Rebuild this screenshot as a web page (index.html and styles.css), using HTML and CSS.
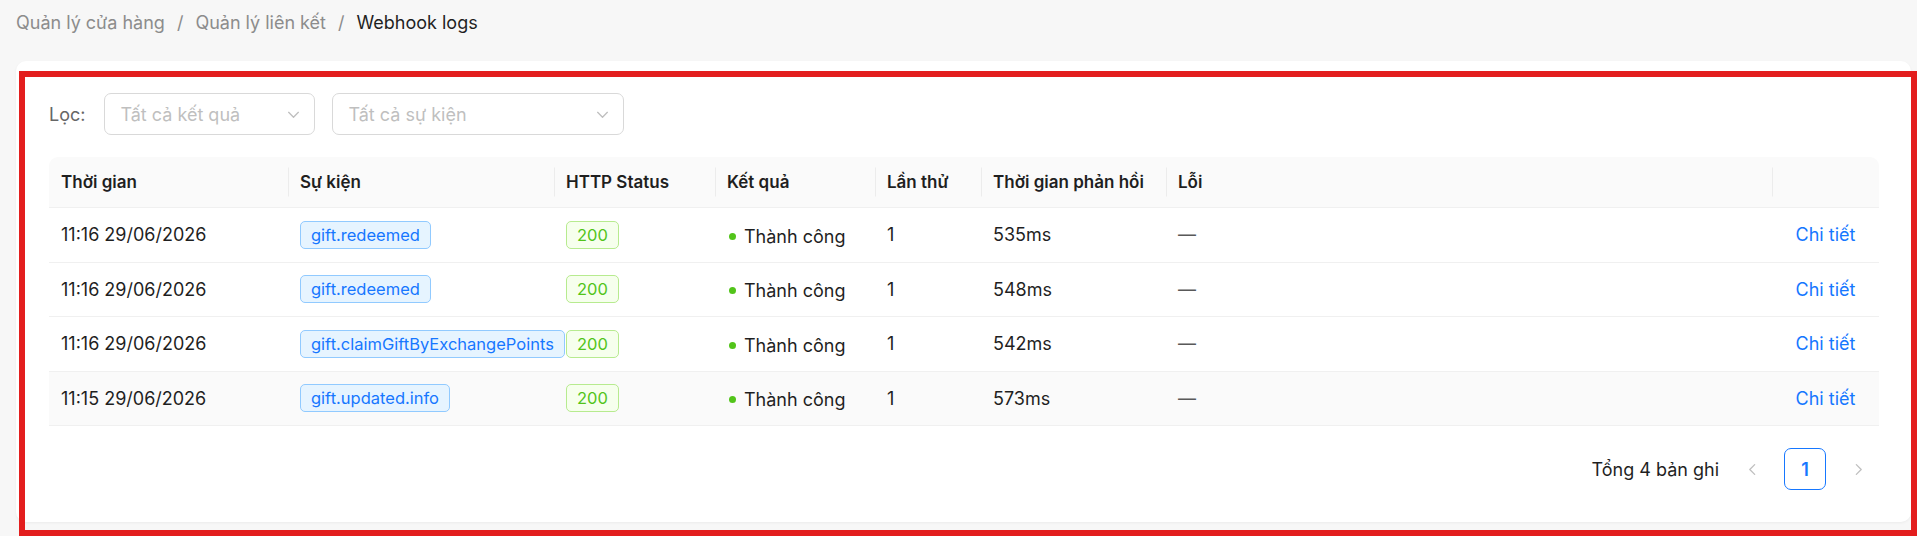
FILE: index.html
```html
<!DOCTYPE html>
<html lang="vi">
<head>
<meta charset="utf-8">
<title>Webhook logs</title>
<link rel="stylesheet" href="styles.css">
</head>
<body>
<div class="page">
  <nav class="breadcrumb">
    <span class="crumb">Quản lý cửa hàng</span>
    <span class="sep">/</span>
    <span class="crumb">Quản lý liên kết</span>
    <span class="sep">/</span>
    <span class="crumb current">Webhook logs</span>
  </nav>

  <section class="card">
    <div class="filters">
      <span class="filter-label">Lọc:</span>
      <div class="select select-result">
        <span class="placeholder">Tất cả kết quả</span>
        <svg class="chev" viewBox="0 0 12 12" width="13" height="13"><path d="M1.5 4 L6 8.5 L10.5 4" fill="none" stroke="currentColor" stroke-width="1.2" stroke-linecap="round" stroke-linejoin="round"/></svg>
      </div>
      <div class="select select-event">
        <span class="placeholder">Tất cả sự kiện</span>
        <svg class="chev" viewBox="0 0 12 12" width="13" height="13"><path d="M1.5 4 L6 8.5 L10.5 4" fill="none" stroke="currentColor" stroke-width="1.2" stroke-linecap="round" stroke-linejoin="round"/></svg>
      </div>
    </div>

    <table class="logs">
      <colgroup>
        <col class="c-time"><col class="c-event"><col class="c-http"><col class="c-result"><col class="c-try"><col class="c-resp"><col class="c-err"><col class="c-act">
      </colgroup>
      <thead>
        <tr>
          <th>Thời gian</th>
          <th class="sepd">Sự kiện</th>
          <th class="sepd">HTTP Status</th>
          <th class="sepd">Kết quả</th>
          <th class="sepd">Lần thử</th>
          <th class="sepd">Thời gian phản hồi</th>
          <th class="sepd">Lỗi</th>
          <th class="sepd"></th>
        </tr>
      </thead>
      <tbody>
        <tr>
          <td>11:16 29/06/2026</td>
          <td><span class="tag tag-blue">gift.redeemed</span></td>
          <td><span class="tag tag-green">200</span></td>
          <td><span class="status"><span class="dot"></span>Thành công</span></td>
          <td>1</td>
          <td>535ms</td>
          <td class="muted">—</td>
          <td class="act"><a class="link">Chi tiết</a></td>
        </tr>
        <tr>
          <td>11:16 29/06/2026</td>
          <td><span class="tag tag-blue">gift.redeemed</span></td>
          <td><span class="tag tag-green">200</span></td>
          <td><span class="status"><span class="dot"></span>Thành công</span></td>
          <td>1</td>
          <td>548ms</td>
          <td class="muted">—</td>
          <td class="act"><a class="link">Chi tiết</a></td>
        </tr>
        <tr>
          <td>11:16 29/06/2026</td>
          <td><span class="tag tag-blue">gift.claimGiftByExchangePoints</span></td>
          <td><span class="tag tag-green">200</span></td>
          <td><span class="status"><span class="dot"></span>Thành công</span></td>
          <td>1</td>
          <td>542ms</td>
          <td class="muted">—</td>
          <td class="act"><a class="link">Chi tiết</a></td>
        </tr>
        <tr class="hover">
          <td>11:15 29/06/2026</td>
          <td><span class="tag tag-blue">gift.updated.info</span></td>
          <td><span class="tag tag-green">200</span></td>
          <td><span class="status"><span class="dot"></span>Thành công</span></td>
          <td>1</td>
          <td>573ms</td>
          <td class="muted">—</td>
          <td class="act"><a class="link">Chi tiết</a></td>
        </tr>
      </tbody>
    </table>

    <div class="pagination">
      <span class="total">Tổng 4 bản ghi</span>
      <span class="pg-item pg-arrow disabled">
        <svg viewBox="0 0 12 12" width="13" height="13"><path d="M8 1.5 L3.5 6 L8 10.5" fill="none" stroke="currentColor" stroke-width="1.2" stroke-linecap="round" stroke-linejoin="round"/></svg>
      </span>
      <span class="pg-item pg-active">1</span>
      <span class="pg-item pg-arrow disabled">
        <svg viewBox="0 0 12 12" width="13" height="13"><path d="M4 1.5 L8.5 6 L4 10.5" fill="none" stroke="currentColor" stroke-width="1.2" stroke-linecap="round" stroke-linejoin="round"/></svg>
      </span>
    </div>
  </section>

  <div class="highlight"></div>
</div>
</body>
</html>
```

FILE: styles.css
```css
* { box-sizing: border-box; }

html, body {
  margin: 0;
  padding: 0;
  background: #f7f7f7;
}

body {
  font-family: Inter, "Noto Sans", "Liberation Sans", sans-serif;
  font-size: 18px;
  color: #1f1f1f;
}

.page {
  position: relative;
  width: 1917px;
  height: 536px;
  padding: 11px 6px 0 16px;
  overflow: hidden;
}

.breadcrumb {
  display: flex;
  align-items: center;
  height: 24px;
  line-height: 24px;
  color: #8c8c8c;
  font-size: 18px;
}

.breadcrumb .sep {
  margin: 0 12px;
  color: #8c8c8c;
}

.breadcrumb .current {
  color: #1f1f1f;
}

.card {
  margin-top: 26px;
  background: #ffffff;
  border-radius: 10px;
  box-shadow: 0 1px 3px rgba(0, 0, 0, 0.05);
  padding: 32px 32px 32px 33px;
}

.filters {
  display: flex;
  align-items: center;
  height: 42px;
}

.filter-label {
  color: #666666;
  margin-right: 19px;
}

.select {
  display: flex;
  align-items: center;
  justify-content: space-between;
  height: 42px;
  border: 1px solid #d9d9d9;
  border-radius: 7px;
  padding: 0 14px 0 15px;
  background: #fff;
}

.select-result { width: 211px; }
.select-event { width: 292px; margin-left: 17px; }

.placeholder { color: #bfbfbf; }

.chev { color: #bfbfbf; }

.logs {
  margin-top: 22px;
  width: 1830px;
  table-layout: fixed;
  border-collapse: separate;
  border-spacing: 0;
}

.c-time { width: 239px; }
.c-event { width: 266px; }
.c-http { width: 161px; }
.c-result { width: 160px; }
.c-try { width: 106px; }
.c-resp { width: 185px; }
.c-err { width: 606px; }
.c-act { width: 107px; }

.logs th {
  position: relative;
  height: 51px;
  padding: 0 12px;
  background: #fafafa;
  text-align: left;
  font-size: 17px;
  font-weight: 600;
  color: #1f1f1f;
  border-bottom: 1px solid #f0f0f0;
  white-space: nowrap;
}

.logs th:first-child { border-top-left-radius: 9px; }
.logs th:last-child { border-top-right-radius: 9px; }

.logs th.sepd::before {
  content: "";
  position: absolute;
  left: 0;
  top: 50%;
  width: 1px;
  height: 29px;
  transform: translateY(-50%);
  background: #ececec;
}

.logs td {
  height: 54.5px;
  padding: 0 12px;
  border-bottom: 1px solid #f0f0f0;
  white-space: nowrap;
  vertical-align: middle;
}

.logs tr.hover td { background: #fafafa; }

.tag {
  display: inline-block;
  height: 28px;
  line-height: 26px;
  padding: 0 10px;
  font-size: 16.5px;
  border-radius: 5px;
  border: 1px solid;
}

.tag-blue {
  color: #1677ff;
  background: #e6f4ff;
  border-color: #91caff;
}

.tag-green {
  color: #52c41a;
  background: #f6ffed;
  border-color: #b7eb8f;
}

.status {
  display: inline-flex;
  align-items: center;
}

.dot {
  width: 7px;
  height: 7px;
  border-radius: 50%;
  background: #52c41a;
  margin: 0 8px 0 2px;
}

.muted { color: #595959; }

.act { text-align: center; }

.link {
  color: #1677ff;
  cursor: pointer;
}

.pagination {
  margin-top: 22px;
  display: flex;
  justify-content: flex-end;
  align-items: center;
  height: 42px;
}

.total {
  margin-right: 12px;
}

.pg-item {
  width: 42px;
  height: 42px;
  display: flex;
  align-items: center;
  justify-content: center;
  border-radius: 7px;
  margin-left: 11px;
}

.pg-item:nth-child(2) { margin-left: 0; }

.pg-arrow.disabled { color: #bfbfbf; }

.pg-active {
  border: 1px solid #1677ff;
  color: #1677ff;
  font-weight: 600;
  background: #fff;
}

.highlight {
  position: absolute;
  left: 19px;
  top: 71px;
  width: 1898px;
  height: 465px;
  border: 6px solid #e31e1e;
  pointer-events: none;
}
```
